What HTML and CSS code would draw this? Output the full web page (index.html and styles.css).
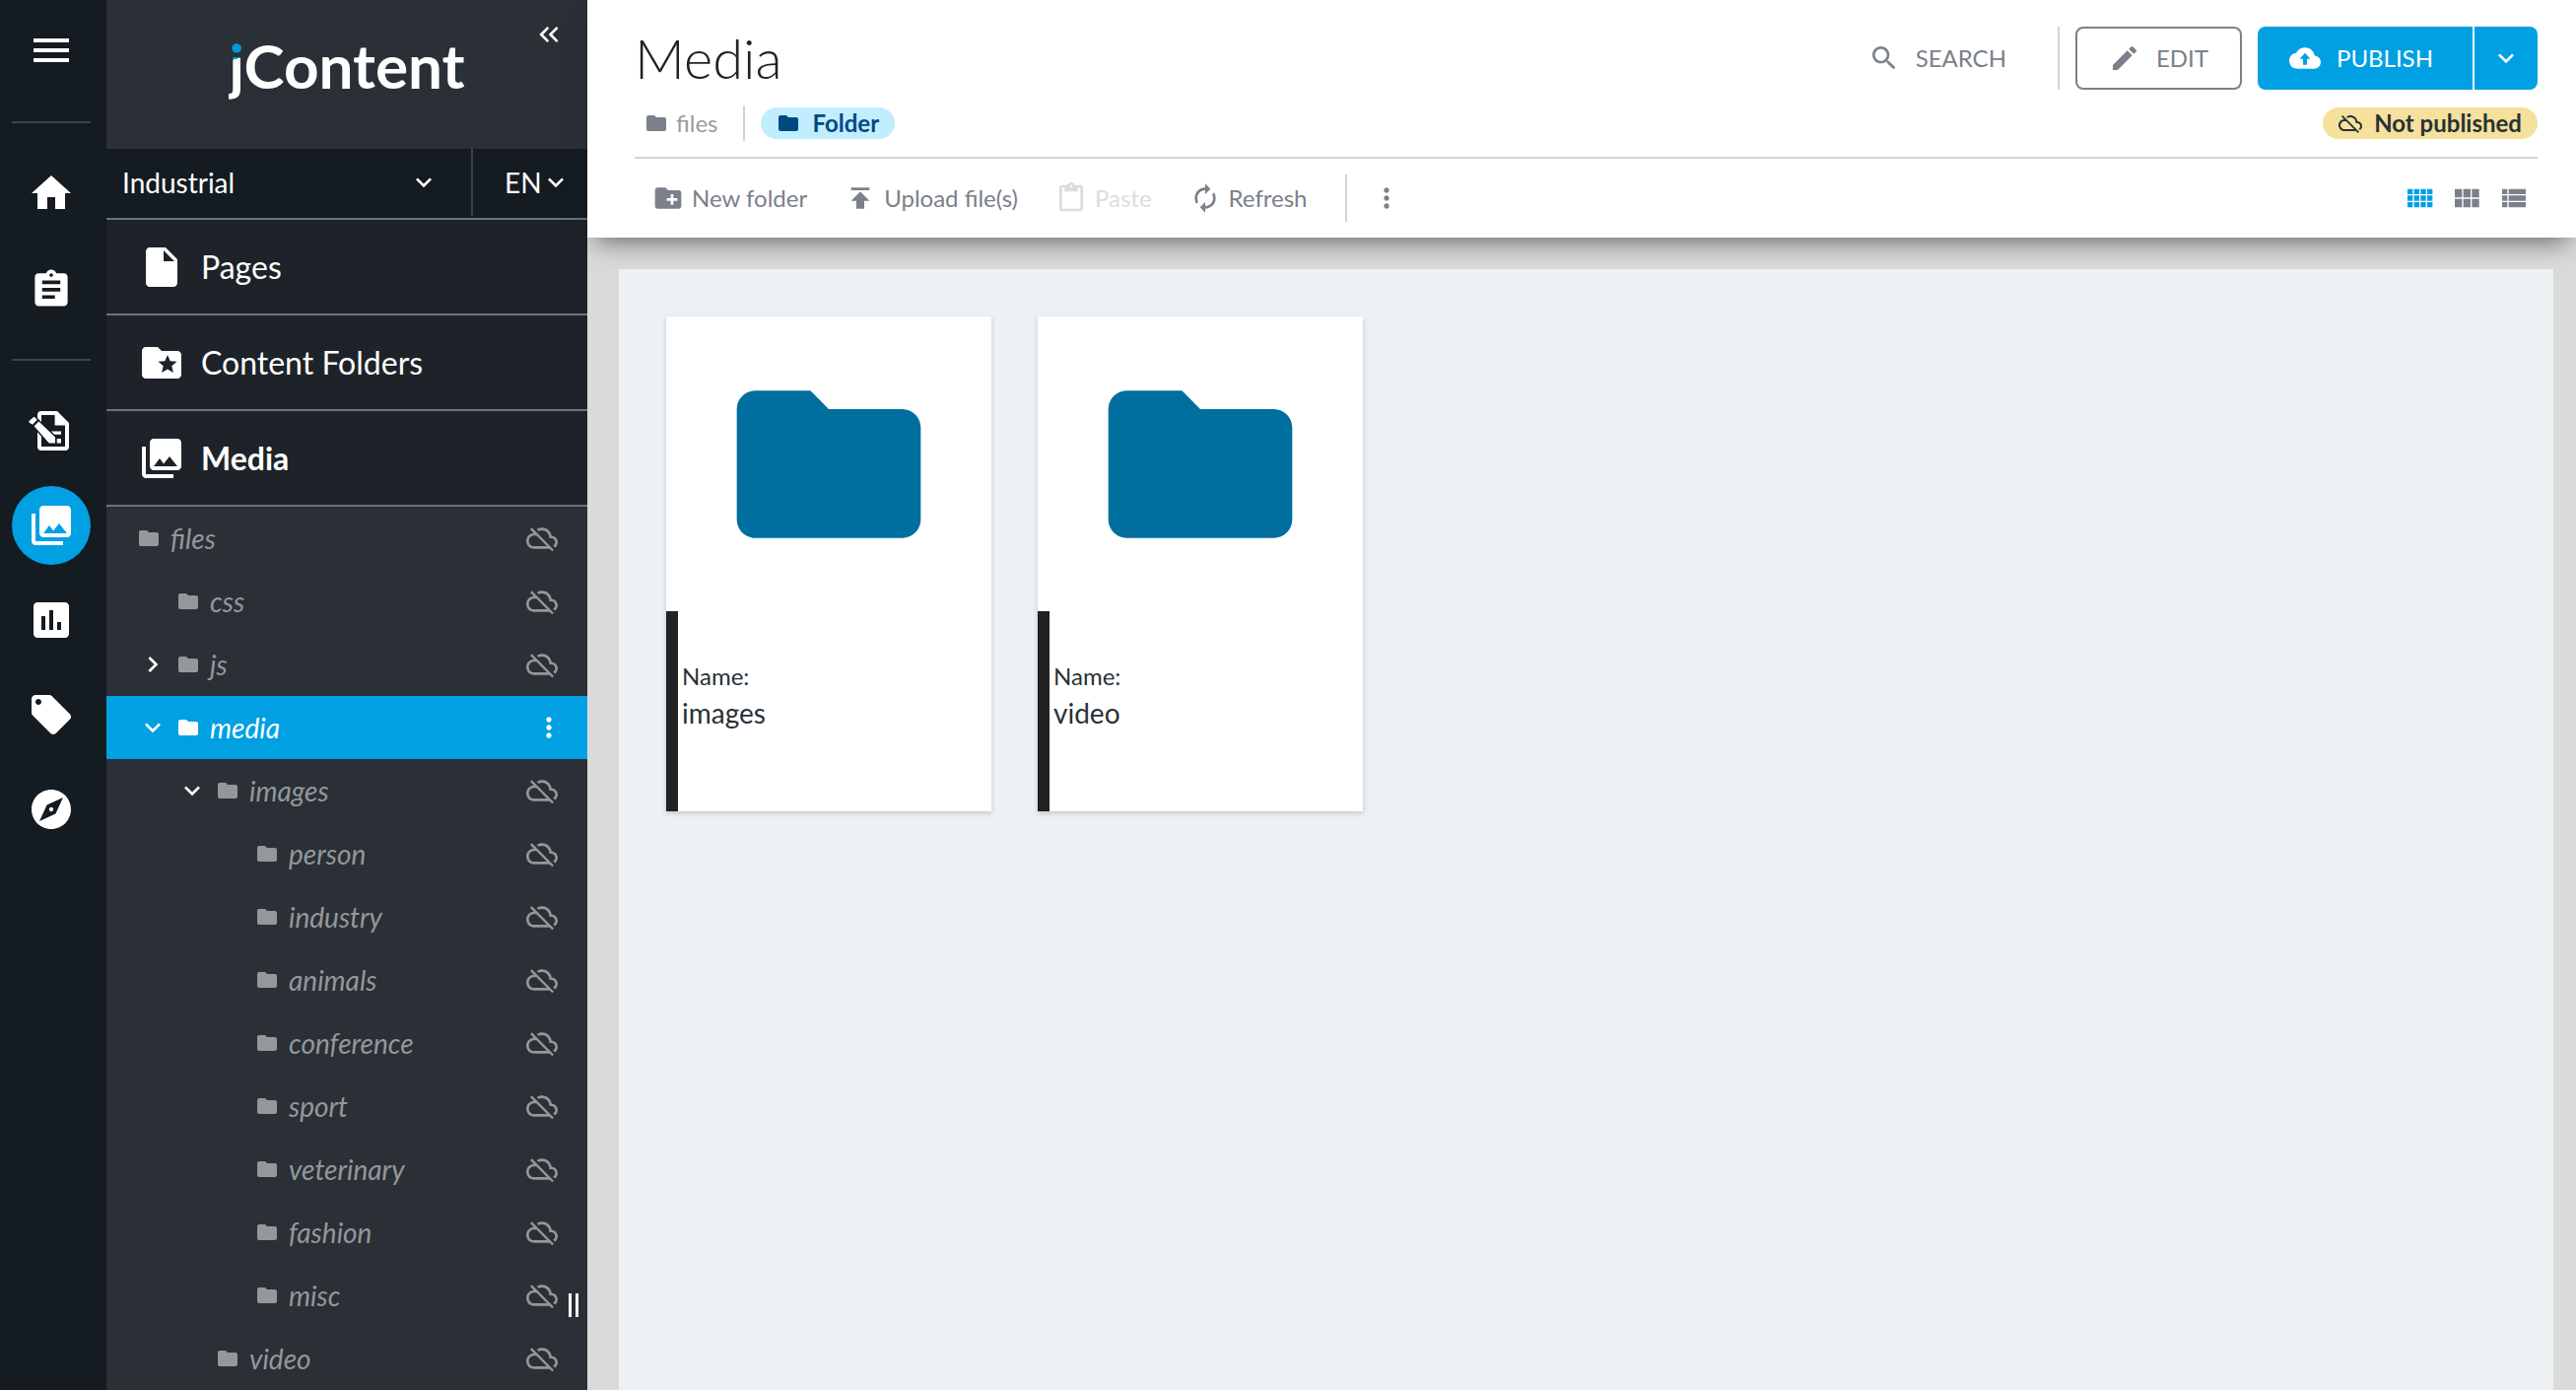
FILE: index.html
```html
<!DOCTYPE html>
<html lang="en">
<head>
<meta charset="utf-8">
<meta name="viewport" content="width=device-width, initial-scale=1">
<title>jContent - Media</title>
<link rel="stylesheet" href="styles.css">
</head>
<body>
<svg class="sprite" aria-hidden="true">
  <symbol id="menu" viewBox="0 0 24 24"><path d="M3 18h18v-2H3v2zm0-5h18v-2H3v2zm0-7v2h18V6H3z"/></symbol>
  <symbol id="home" viewBox="0 0 24 24"><path d="M10 20v-6h4v6h5v-8h3L12 3 2 12h3v8z"/></symbol>
  <symbol id="tasks" viewBox="-1 -2 26 26"><path d="M19 3h-4.180C14.400 1.840 13.300 1 12 1c-1.300 0-2.400.84-2.820 2H5c-1.100 0-2 .9-2 2v14c0 1.100.9 2 2 2h14c1.100 0 2-.9 2-2V5c0-1.100-.9-2-2-2zm-7 0c.55 0 1 .45 1 1s-.45 1-1 1-1-.45-1-1 .45-1 1-1zm2 14H7v-2h7v2zm3-4H7v-2h10v2zm0-4H7V7h10v2z"/></symbol>
  <symbol id="form" viewBox="0 0 24 24"><path fill-rule="evenodd" d="M7 2h8l6 6v12a2 2 0 0 1-2 2H7a2 2 0 0 1-2-2V4a2 2 0 0 1 2-2zm0 2v16h12V9.200h-5.200V4z"/><path d="M12 12.200h5v1.700h-5zM14.800 16H17v2.200h-2.200z"/><path class="form-pencil" d="M3.300 9.600 5.700 7.200l8.300 8v3.100h-3.100z"/><path class="form-pencil" d="M.9 7.900c-.3-.4-.3-.7 0-1l1.900-1.700c.4-.3.7-.3 1 0l1.100 1.200-2.400 2.500z"/></symbol>
  <symbol id="media" viewBox="0 0 24 24"><path d="M22 16V4c0-1.100-.9-2-2-2H8c-1.100 0-2 .9-2 2v12c0 1.100.9 2 2 2h12c1.100 0 2-.9 2-2zm-11-4l2.030 2.710L16 11l4 5H8l3-4zM2 6v14c0 1.100.9 2 2 2h14v-2H4V6H2z"/></symbol>
  <symbol id="chart" viewBox="0 0 24 24"><path d="M19 3H5c-1.100 0-2 .9-2 2v14c0 1.100.9 2 2 2h14c1.100 0 2-.9 2-2V5c0-1.100-.9-2-2-2zM9 17H7v-7h2v7zm4 0h-2V7h2v10zm4 0h-2v-4h2v4z"/></symbol>
  <symbol id="tag" viewBox="0 0 24 24"><path d="M21.410 11.580l-9-9C12.050 2.220 11.550 2 11 2H4c-1.100 0-2 .9-2 2v7c0 .55.22 1.050.59 1.420l9 9c.36.36.86.58 1.410.58.55 0 1.050-.22 1.410-.59l7-7c.37-.36.59-.86.59-1.410 0-.55-.23-1.060-.59-1.420zM5.500 7C4.670 7 4 6.330 4 5.500S4.670 4 5.500 4 7 4.670 7 5.500 6.330 7 5.500 7z"/></symbol>
  <symbol id="compass" viewBox="0 0 24 24"><path d="M12 10.900c-.61 0-1.100.49-1.100 1.100s.49 1.100 1.100 1.100c.61 0 1.100-.49 1.100-1.100s-.49-1.100-1.100-1.100zM12 2C6.480 2 2 6.480 2 12s4.480 10 10 10 10-4.480 10-10S17.520 2 12 2zm2.190 12.190L6 18l3.810-8.190L18 6l-3.810 8.190z"/></symbol>
  <symbol id="collapse" viewBox="0 0 24 24"><path d="M18.400 7.400 17 6l-6 6 6 6 1.400-1.400-4.600-4.600zM11.400 7.400 10 6l-6 6 6 6 1.400-1.400L6.800 12z"/></symbol>
  <symbol id="down" viewBox="0 0 24 24"><path d="M7.410 8.590 12 13.170l4.590-4.580L18 10l-6 6-6-6z"/></symbol>
  <symbol id="right" viewBox="0 0 24 24"><path d="M8.590 16.590 13.170 12 8.590 7.410 10 6l6 6-6 6z"/></symbol>
  <symbol id="file" viewBox="0 0 24 24"><path d="M6 2c-1.100 0-2 .9-2 2v16c0 1.100.9 2 2 2h12c1.100 0 2-.9 2-2V8l-6-6H6zm7 7V3.500L18.500 9H13z"/></symbol>
  <symbol id="folder" viewBox="0 0 24 24"><path d="M10 4H4c-1.100 0-2 .9-2 2v12c0 1.100.9 2 2 2h16c1.100 0 2-.9 2-2V8c0-1.100-.9-2-2-2h-8l-2-2z"/></symbol>
  <symbol id="folder-star" viewBox="0 0 24 24"><path d="M20 6h-8l-2-2H4c-1.100 0-2 .9-2 2v12c0 1.100.9 2 2 2h16c1.100 0 2-.9 2-2V8c0-1.100-.9-2-2-2zm-2.060 11L15 15.280 12.060 17l.78-3.330-2.590-2.240 3.410-.29L15 8l1.340 3.140 3.410.29-2.590 2.240.78 3.330z"/></symbol>
  <symbol id="folder-plus" viewBox="0 0 24 24"><path d="M20 6h-8l-2-2H4c-1.110 0-1.990.89-1.990 2L2 18c0 1.110.89 2 2 2h16c1.110 0 2-.89 2-2V8c0-1.110-.89-2-2-2zm-1 8h-3v3h-2v-3h-3v-2h3V9h2v3h3v2z"/></symbol>
  <symbol id="cloud-off" viewBox="0 0 24 24"><path d="M19.350 10.040C18.670 6.590 15.640 4 12 4c-1.480 0-2.850.43-4.010 1.170l1.460 1.460C10.210 6.230 11.080 6 12 6c3.040 0 5.500 2.460 5.500 5.500v.5H19c1.660 0 3 1.340 3 3 0 1.130-.64 2.110-1.560 2.620l1.450 1.450C23.160 18.160 24 16.680 24 15c0-2.640-2.050-4.780-4.650-4.960zM3 5.270l2.750 2.740C2.560 8.150 0 10.770 0 14c0 3.310 2.690 6 6 6h11.730l2 2L21 20.730 4.270 4 3 5.270zM7.730 10l8 8H6c-2.210 0-4-1.790-4-4s1.790-4 4-4h1.730z"/></symbol>
  <symbol id="more" viewBox="0 0 24 24"><path d="M12 8c1.100 0 2-.9 2-2s-.9-2-2-2-2 .9-2 2 .9 2 2 2zm0 2c-1.100 0-2 .9-2 2s.9 2 2 2 2-.9 2-2-.9-2-2-2zm0 6c-1.100 0-2 .9-2 2s.9 2 2 2 2-.9 2-2-.9-2-2-2z"/></symbol>
  <symbol id="search" viewBox="0 0 24 24"><path d="M15.500 14h-.79l-.28-.27C15.410 12.590 16 11.110 16 9.500 16 5.910 13.090 3 9.500 3S3 5.910 3 9.500 5.910 16 9.500 16c1.610 0 3.090-.59 4.230-1.570l.27.28v.79l5 4.990L20.490 19l-4.990-5zm-6 0C7.010 14 5 11.990 5 9.500S7.010 5 9.500 5 14 7.010 14 9.500 11.990 14 9.500 14z"/></symbol>
  <symbol id="edit" viewBox="0 0 24 24"><path d="M3 17.250V21h3.750L17.810 9.940l-3.750-3.750L3 17.250zM20.710 7.040c.39-.39.39-1.020 0-1.410l-2.340-2.340c-.39-.39-1.020-.39-1.410 0l-1.830 1.830 3.750 3.750 1.830-1.830z"/></symbol>
  <symbol id="publish" viewBox="0 0 24 24"><path d="M19.350 10.040C18.670 6.590 15.640 4 12 4 9.110 4 6.600 5.640 5.350 8.040 2.340 8.360 0 10.910 0 14c0 3.310 2.690 6 6 6h13c2.760 0 5-2.240 5-5 0-2.640-2.050-4.780-4.650-4.960zM13.500 12.500V17h-3v-4.500H8L12 8l4 4.500h-2.500z"/></symbol>
  <symbol id="upload" viewBox="0 0 24 24"><path d="M5 4v2h14V4H5zm0 10h4v6h6v-6h4l-7-7-7 7z"/></symbol>
  <symbol id="paste" viewBox="0 0 24 24"><path d="M19 2h-4.180C14.400.84 13.300 0 12 0c-1.300 0-2.400.84-2.820 2H5c-1.100 0-2 .9-2 2v16c0 1.100.9 2 2 2h14c1.100 0 2-.9 2-2V4c0-1.100-.9-2-2-2zm-7 0c.55 0 1 .45 1 1s-.45 1-1 1-1-.45-1-1 .45-1 1-1zm7 18H5V4h2v3h10V4h2v16z"/></symbol>
  <symbol id="refresh" viewBox="0 0 24 24"><path d="M12 6v3l4-4-4-4v3c-4.420 0-8 3.580-8 8 0 1.570.46 3.030 1.240 4.260L6.700 14.800c-.45-.83-.7-1.790-.7-2.800 0-3.310 2.690-6 6-6zm6.760 1.740L17.300 9.200c.44.84.7 1.790.7 2.800 0 3.310-2.690 6-6 6v-3l-4 4 4 4v-3c4.420 0 8-3.580 8-8 0-1.570-.46-3.030-1.240-4.260z"/></symbol>
  <symbol id="grid-small" viewBox="0 0 24 24"><path d="M3 9h4V5H3v4zm0 5h4v-4H3v4zm5 0h4v-4H8v4zm5 0h4v-4h-4v4zM8 9h4V5H8v4zm5-4v4h4V5h-4zm5 9h4v-4h-4v4zM3 19h4v-4H3v4zm5 0h4v-4H8v4zm5 0h4v-4h-4v4zm5 0h4v-4h-4v4zm0-14v4h4V5h-4z"/></symbol>
  <symbol id="grid-large" viewBox="0 0 24 24"><path d="M3 11.500h5.500V5H3v6.500zm0 7.500h5.500v-6.500H3V19zm6.500 0H15v-6.500H9.500V19zm6.500 0h5.500v-6.500H16V19zM9.500 11.500H15V5H9.500v6.500zM16 5v6.500h5.500V5H16z"/></symbol>
  <symbol id="list" viewBox="0 0 24 24"><path d="M3 14h4v-4H3v4zm0 5h4v-4H3v4zM3 9h4V5H3v4zm5 5h13v-4H8v4zm0 5h13v-4H8v4zM8 5v4h13V5H8z"/></symbol>
</svg>

<div class="app">
  <nav class="rail" aria-label="Main">
    <button class="rail__item" aria-label="Menu"><svg class="icon icon--l"><use href="#menu"/></svg></button>
    <hr class="rail__rule">
    <a class="rail__item" href="#" aria-label="Home"><svg class="icon icon--l"><use href="#home"/></svg></a>
    <a class="rail__item" href="#" aria-label="Tasks"><svg class="icon icon--l"><use href="#tasks"/></svg></a>
    <hr class="rail__rule">
    <a class="rail__item" href="#" aria-label="Forms"><svg class="icon icon--l"><use href="#form"/></svg></a>
    <a class="rail__item rail__item--on" href="#" aria-label="jContent"><svg class="icon icon--l"><use href="#media"/></svg></a>
    <a class="rail__item" href="#" aria-label="Reports"><svg class="icon icon--l"><use href="#chart"/></svg></a>
    <a class="rail__item" href="#" aria-label="Tags"><svg class="icon icon--l"><use href="#tag"/></svg></a>
    <a class="rail__item" href="#" aria-label="Explore"><svg class="icon icon--l"><use href="#compass"/></svg></a>
  </nav>

  <aside class="side">
    <header class="side__head">
      <div class="logo"><span class="logo__j">j</span>Content</div>
      <button class="side__collapse" aria-label="Collapse"><svg class="icon icon--m"><use href="#collapse"/></svg></button>
    </header>
    <div class="switch">
      <label class="switch__box switch__box--site">
        <select class="switch__select" aria-label="Site"><option>Industrial</option></select>
        <svg class="icon icon--m"><use href="#down"/></svg>
      </label>
      <label class="switch__box switch__box--lang">
        <select class="switch__select" aria-label="Language"><option>EN</option></select>
        <svg class="icon icon--m"><use href="#down"/></svg>
      </label>
    </div>
    <nav class="sections" aria-label="Sections">
      <a class="section" href="#"><svg class="icon icon--l"><use href="#file"/></svg>Pages</a>
      <a class="section" href="#"><svg class="icon icon--l"><use href="#folder-star"/></svg>Content Folders</a>
      <a class="section section--on" href="#"><svg class="icon icon--l"><use href="#media"/></svg>Media</a>
    </nav>
    <ul class="tree">
      <li class="node node--0"><svg class="icon icon--s"><use href="#folder"/></svg><a class="node__name" href="#">files</a><svg class="icon icon--m node__state"><use href="#cloud-off"/></svg></li>
      <li class="node node--1"><span class="node__toggle"></span><svg class="icon icon--s"><use href="#folder"/></svg><a class="node__name" href="#">css</a><svg class="icon icon--m node__state"><use href="#cloud-off"/></svg></li>
      <li class="node node--1"><button class="node__toggle" aria-label="Expand js"><svg class="icon icon--m"><use href="#right"/></svg></button><svg class="icon icon--s"><use href="#folder"/></svg><a class="node__name" href="#">js</a><svg class="icon icon--m node__state"><use href="#cloud-off"/></svg></li>
      <li class="node node--1 node--on"><button class="node__toggle" aria-label="Collapse media"><svg class="icon icon--m"><use href="#down"/></svg></button><svg class="icon icon--s"><use href="#folder"/></svg><a class="node__name" href="#">media</a><button class="node__more" aria-label="More actions"><svg class="icon icon--m"><use href="#more"/></svg></button></li>
      <li class="node node--2"><button class="node__toggle" aria-label="Collapse images"><svg class="icon icon--m"><use href="#down"/></svg></button><svg class="icon icon--s"><use href="#folder"/></svg><a class="node__name" href="#">images</a><svg class="icon icon--m node__state"><use href="#cloud-off"/></svg></li>
      <li class="node node--3"><span class="node__toggle"></span><svg class="icon icon--s"><use href="#folder"/></svg><a class="node__name" href="#">person</a><svg class="icon icon--m node__state"><use href="#cloud-off"/></svg></li>
      <li class="node node--3"><span class="node__toggle"></span><svg class="icon icon--s"><use href="#folder"/></svg><a class="node__name" href="#">industry</a><svg class="icon icon--m node__state"><use href="#cloud-off"/></svg></li>
      <li class="node node--3"><span class="node__toggle"></span><svg class="icon icon--s"><use href="#folder"/></svg><a class="node__name" href="#">animals</a><svg class="icon icon--m node__state"><use href="#cloud-off"/></svg></li>
      <li class="node node--3"><span class="node__toggle"></span><svg class="icon icon--s"><use href="#folder"/></svg><a class="node__name" href="#">conference</a><svg class="icon icon--m node__state"><use href="#cloud-off"/></svg></li>
      <li class="node node--3"><span class="node__toggle"></span><svg class="icon icon--s"><use href="#folder"/></svg><a class="node__name" href="#">sport</a><svg class="icon icon--m node__state"><use href="#cloud-off"/></svg></li>
      <li class="node node--3"><span class="node__toggle"></span><svg class="icon icon--s"><use href="#folder"/></svg><a class="node__name" href="#">veterinary</a><svg class="icon icon--m node__state"><use href="#cloud-off"/></svg></li>
      <li class="node node--3"><span class="node__toggle"></span><svg class="icon icon--s"><use href="#folder"/></svg><a class="node__name" href="#">fashion</a><svg class="icon icon--m node__state"><use href="#cloud-off"/></svg></li>
      <li class="node node--3"><span class="node__toggle"></span><svg class="icon icon--s"><use href="#folder"/></svg><a class="node__name" href="#">misc</a><svg class="icon icon--m node__state"><use href="#cloud-off"/></svg></li>
      <li class="node node--2"><span class="node__toggle"></span><svg class="icon icon--s"><use href="#folder"/></svg><a class="node__name" href="#">video</a><svg class="icon icon--m node__state"><use href="#cloud-off"/></svg></li>
    </ul>
    <div class="side__grip"></div>
  </aside>

  <main class="main">
    <header class="head">
      <div class="head__top">
        <h1 class="title">Media</h1>
        <div class="actions">
          <button class="btn btn--plain"><svg class="icon icon--m"><use href="#search"/></svg>SEARCH</button>
          <span class="rule rule--tall"></span>
          <button class="btn btn--outline"><svg class="icon icon--m"><use href="#edit"/></svg>EDIT</button>
          <div class="split">
            <button class="btn btn--solid"><svg class="icon icon--m"><use href="#publish"/></svg>PUBLISH</button>
            <button class="btn btn--arrow" aria-label="More publish options"><svg class="icon icon--m"><use href="#down"/></svg></button>
          </div>
        </div>
      </div>
      <div class="head__path">
        <a class="crumb" href="#"><svg class="icon icon--s"><use href="#folder"/></svg><span class="crumb__text">files</span></a>
        <span class="rule rule--short"></span>
        <span class="chip chip--type"><svg class="icon icon--s"><use href="#folder"/></svg>Folder</span>
        <span class="chip chip--status"><svg class="icon icon--s"><use href="#cloud-off"/></svg>Not published</span>
      </div>
      <div class="tools">
        <button class="tool"><svg class="icon icon--m"><use href="#folder-plus"/></svg>New folder</button>
        <button class="tool"><svg class="icon icon--m"><use href="#upload"/></svg>Upload file(s)</button>
        <button class="tool" disabled><svg class="icon icon--m"><use href="#paste"/></svg>Paste</button>
        <button class="tool"><svg class="icon icon--m"><use href="#refresh"/></svg>Refresh</button>
        <span class="rule rule--mid"></span>
        <button class="tool tool--more" aria-label="More actions"><svg class="icon icon--m"><use href="#more"/></svg></button>
        <div class="views">
          <button class="tool tool--on" aria-label="Small thumbnails"><svg class="icon icon--m"><use href="#grid-small"/></svg></button>
          <button class="tool" aria-label="Large thumbnails"><svg class="icon icon--m"><use href="#grid-large"/></svg></button>
          <button class="tool" aria-label="List"><svg class="icon icon--m"><use href="#list"/></svg></button>
        </div>
      </div>
    </header>
    <section class="panel" aria-label="Content">
      <article class="card">
        <div class="card__thumb"><svg class="icon icon--xl"><use href="#folder"/></svg></div>
        <dl class="card__info"><dt class="card__label">Name:</dt><dd class="card__value">images</dd></dl>
      </article>
      <article class="card">
        <div class="card__thumb"><svg class="icon icon--xl"><use href="#folder"/></svg></div>
        <dl class="card__info"><dt class="card__label">Name:</dt><dd class="card__value">video</dd></dl>
      </article>
    </section>
  </main>
</div>
</body>
</html>
```
FILE: styles.css
```css
* { box-sizing: border-box; }

body {
  margin: 0;
  font-family: Lato, "Open Sans", sans-serif;
  font-size: 24px;
  line-height: 32px;
  color: #293136;
}

button, select {
  margin: 0;
  padding: 0;
  border: 0;
  background: none;
  color: inherit;
  font: inherit;
}

a { color: inherit; text-decoration: none; }

.sprite { display: none; }

.icon { display: block; flex: none; fill: currentColor; }
.icon--s { width: 24px; height: 24px; }
.icon--m { width: 32px; height: 32px; }
.icon--l { width: 48px; height: 48px; }
.icon--xl { width: 224px; height: 224px; }
.form-pencil { stroke: #141b21; stroke-width: 1.4; paint-order: stroke; }

.app { display: flex; height: 100vh; overflow: hidden; }

/* Icon rail */
.rail {
  flex: none;
  width: 108px;
  padding: 11px 16px 0 12px;
  display: flex;
  flex-direction: column;
  gap: 16px;
  background: #141b21;
  color: #fff;
}
.rail__item {
  width: 80px;
  height: 80px;
  flex: none;
  display: flex;
  align-items: center;
  justify-content: center;
  border-radius: 50%;
}
.rail__item--on { background: #00a0e3; }
.rail__rule {
  width: 80px;
  height: 2px;
  flex: none;
  margin: 16px 0 15px;
  border: 0;
  background: #3b4248;
}

/* Sidebar */
.side {
  position: relative;
  flex: none;
  width: 488px;
  display: flex;
  flex-direction: column;
  background: #2a3036;
  color: #fff;
}
.side__head {
  position: relative;
  height: 151px;
  flex: none;
  display: flex;
  justify-content: center;
  padding-top: 30px;
}
.logo { font-size: 62px; line-height: 72px; font-weight: 700; }
.logo__j {
  background: linear-gradient(168deg, #0097dd 42%, #fff 42%);
  background-clip: text;
  -webkit-background-clip: text;
  color: transparent;
}
.side__collapse { position: absolute; top: 19px; right: 22px; }

.switch {
  display: flex;
  flex: none;
  height: 72px;
  padding-bottom: 2px;
  background: #141b21;
  border-bottom: 2px solid #6c737a;
  font-size: 28px;
}
.switch__box { display: flex; align-items: center; }
.switch__box--site { flex: 1; padding: 0 32px 0 16px; }
.switch__box--lang { width: 118px; padding: 0 16px 0 32px; border-left: 2px solid #3b4248; }
.switch__select { flex: 1; min-width: 0; appearance: none; outline: 0; line-height: 40px; }

.sections { flex: none; }
.section {
  display: flex;
  align-items: center;
  gap: 16px;
  height: 97px;
  padding-left: 32px;
  border-bottom: 2px solid #6c737a;
  background: #1d2328;
  font-size: 32px;
  line-height: 40px;
}
.section--on { font-weight: 700; }

.tree { margin: 0; padding: 0; list-style: none; font-size: 28px; font-style: italic; }
.node {
  display: flex;
  align-items: center;
  height: 64px;
  padding-right: 30px;
  color: #94989b;
}
.node--0, .node--1 { padding-left: 31px; }
.node--2 { padding-left: 71px; }
.node--3 { padding-left: 111px; }
.node--on { padding-right: 23px; background: #00a0e3; color: #fff; }
.node__toggle { width: 40px; flex: none; color: #fff; }
.node__name { flex: 1; padding-left: 10px; }

.side__grip {
  position: absolute;
  right: 9px;
  bottom: 74px;
  width: 10px;
  height: 24px;
  border: solid #fff;
  border-width: 0 3px;
}

/* Main column */
.main {
  flex: 1;
  min-width: 0;
  display: flex;
  flex-direction: column;
  background: #dadada;
}
.head {
  position: relative;
  flex: none;
  padding: 27px 39px 0 48px;
  background: #fff;
  color: #7b808a;
  box-shadow: 0 12px 24px -8px rgba(20, 28, 34, .6);
}
.head__top { display: flex; justify-content: space-between; height: 64px; }
.title { margin: 0; font-size: 56px; line-height: 64px; font-weight: 300; color: #1d2328; }
.actions { display: flex; gap: 16px; }

.btn {
  display: flex;
  align-items: center;
  gap: 16px;
  height: 64px;
  padding: 0 32px;
}
.btn--plain { padding: 0 36px 0 0; }
.btn--outline { border: 2px solid #7b808a; border-radius: 8px; }
.split { display: flex; gap: 2px; }
.btn--solid { min-width: 218px; border-radius: 8px 0 0 8px; background: #00a0e3; color: #fff; }
.btn--arrow { padding: 0 16px; border-radius: 0 8px 8px 0; background: #00a0e3; color: #fff; }

.rule { flex: none; width: 2px; background: #d3d4d6; }
.rule--tall { height: 64px; }
.rule--mid { height: 48px; }
.rule--short { height: 36px; }

.head__path {
  display: flex;
  align-items: center;
  gap: 16px;
  height: 70px;
  border-bottom: 2px solid #d3d4d6;
}
.crumb { display: flex; align-items: center; gap: 8px; padding: 0 10px; }
.crumb__text { color: #989ba3; }
.chip { display: flex; align-items: center; gap: 12px; height: 32px; padding: 0 16px; border-radius: 16px; font-weight: 700; }
.chip--type { background: #c1eeff; color: #004983; }
.chip--status { margin-left: auto; background: #f5e19c; color: #293136; }

.tools { display: flex; align-items: center; gap: 38px; height: 80px; padding: 0 8px 0 18px; }
.tool { display: flex; align-items: center; gap: 8px; }
.tool:disabled { color: #dadce0; }
.tool--more { margin-left: -14px; }
.tool--on { color: #00a0e3; }
.views { display: flex; gap: 16px; margin-left: auto; }

.panel {
  flex: 1;
  min-height: 0;
  margin: 32px 23px 0 32px;
  padding: 48px;
  display: grid;
  grid-template-columns: repeat(auto-fill, 330px);
  align-content: start;
  gap: 47px;
  background: #edf1f4;
}

.card { background: #fff; box-shadow: 0 2px 5px rgba(20, 28, 34, .2); }
.card__thumb { display: flex; align-items: center; justify-content: center; height: 299px; color: #006f9e; }
.card__info {
  display: flex;
  flex-direction: column;
  justify-content: center;
  gap: 5px;
  height: 203px;
  margin: 0;
  padding: 0 4px 34px;
  border-left: 12px solid #222;
}
.card__label { font-size: 24px; }
.card__value { margin: 0; font-size: 28px; }
```
